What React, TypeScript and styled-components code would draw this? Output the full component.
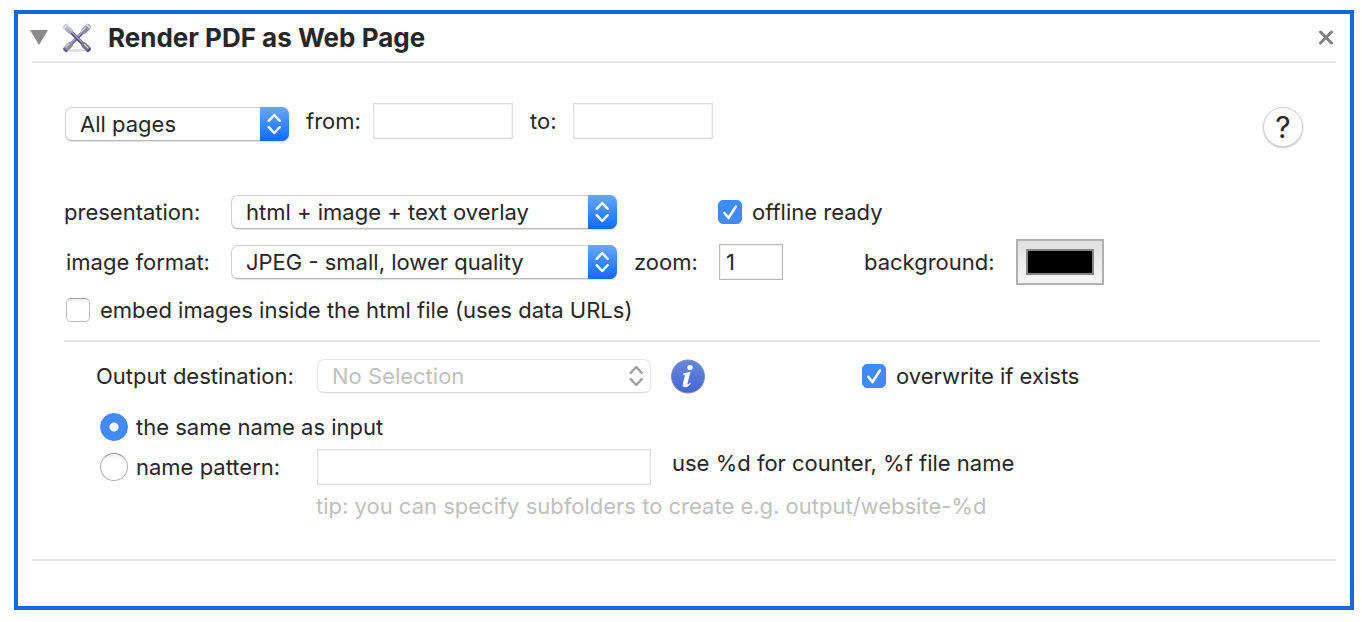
import React, { useId, useState } from "react";
import styled, { createGlobalStyle, css } from "styled-components";

const GlobalStyle = createGlobalStyle`
  *, *::before, *::after { box-sizing: border-box; }
  body {
    margin: 0;
    background: #ffffff;
    color: #262626;
    font-family: Inter, "Liberation Sans", sans-serif;
    font-size: 22px;
    line-height: 28px;
  }
  button, input, select { font: inherit; color: inherit; margin: 0; }
`;

const Page = styled.main`
  padding: 10px 8px 12px 14px;
`;

const Frame = styled.section`
  border: 4px solid #1068e0;
  padding: 0 14px 45px;
`;

const Header = styled.header`
  display: flex;
  align-items: center;
  height: 49px;
  border-bottom: 2px solid #e5e5e5;
`;

const IconButton = styled.button`
  display: flex;
  padding: 0;
  border: 0;
  background: none;
`;

const Disclosure = styled(IconButton)`
  margin-left: -2px;
`;

const CloseButton = styled(IconButton)`
  margin-left: auto;
  margin-right: 2px;
`;

const ActionIcon = styled.svg`
  margin: 0 15px 0 13px;
`;

const Title = styled.h1`
  margin: 0;
  font-size: 26px;
  font-weight: 700;
  line-height: 32px;
`;

const Body = styled.div`
  padding: 40px 16px 39px 32px;
  border-bottom: 2px solid #e5e5e5;
`;

const Row = styled.div<{ $height?: number; $gap?: number }>`
  display: flex;
  align-items: center;
  height: ${(p) => p.$height ?? 34}px;
  margin-top: ${(p) => p.$gap ?? 0}px;
`;

const PageRow = styled(Row)`
  align-items: flex-start;
`;

const Offset = styled.div`
  padding: 4px 0 0 1px;
`;

const Range = styled.div`
  display: flex;
  align-items: center;
  height: 36px;
`;

const Label = styled.label<{ $width: number; $before?: number }>`
  flex: none;
  width: ${(p) => p.$width}px;
  margin-left: ${(p) => p.$before ?? 0}px;
  white-space: nowrap;
`;

const TextField = styled.input<{ $width: number; $strong?: boolean }>`
  flex: none;
  width: ${(p) => p.$width}px;
  height: 36px;
  padding: 0 6px;
  border: 1px solid ${(p) => (p.$strong ? "#b8b8b8" : "#dedede")};
  border-radius: 0;
  background: #ffffff;
  box-shadow: inset 0 0 0 1px #f3f3f3;
  outline: none;
`;

const SelectBox = styled.div<{ $width: number }>`
  position: relative;
  flex: none;
  width: ${(p) => p.$width}px;
  height: 34px;
`;

const SelectControl = styled.select`
  appearance: none;
  display: block;
  width: 100%;
  height: 34px;
  padding: 0 34px 0 14px;
  border: 1px solid #d0d0d0;
  border-bottom-color: #b8b8b8;
  border-radius: 7px;
  background: #ffffff;
  box-shadow: 0 1px 1px rgba(0, 0, 0, 0.12);
  line-height: 28px;
  outline: none;

  &:disabled {
    border-color: #e6e6e6;
    border-bottom-color: #dcdcdc;
    box-shadow: 0 1px 1px rgba(0, 0, 0, 0.06);
    color: #bfbfbf;
    opacity: 1;
  }
`;

const Stepper = styled.span<{ $disabled?: boolean }>`
  position: absolute;
  top: 0;
  right: 0;
  display: flex;
  align-items: center;
  justify-content: center;
  width: 29px;
  height: 34px;
  border-radius: 0 7px 7px 0;
  color: ${(p) => (p.$disabled ? "#a0a0a0" : "#ffffff")};
  pointer-events: none;
  ${(p) =>
    !p.$disabled &&
    css`
      background: linear-gradient(#6ba7f9, #3b88fb 50%, #116bff);
    `}
`;

const Option = styled.label<{ $before?: number }>`
  display: flex;
  align-items: center;
  margin-left: ${(p) => p.$before ?? 0}px;
  white-space: nowrap;
`;

const CheckInput = styled.input.attrs({ type: "checkbox" })`
  appearance: none;
  display: grid;
  place-items: center;
  width: 24px;
  height: 24px;
  margin-right: 10px;
  border: 1px solid #bcbcbc;
  border-top-color: #a2a2a2;
  border-radius: 5px;
  background: linear-gradient(#f0f0f0, #ffffff 25%);

  &:checked {
    border-color: #3f88f8;
    background: #408af9;
  }
`;

const CheckBox = styled.span`
  position: relative;
  display: flex;
`;

const CheckMark = styled.svg`
  position: absolute;
  top: 0;
  left: 0;
  pointer-events: none;
`;

const RadioInput = styled.input.attrs({ type: "radio" })`
  appearance: none;
  width: 28px;
  height: 28px;
  margin-right: 8px;
  border: 1px solid #b2b2b2;
  border-top-color: #989898;
  border-radius: 50%;
  background: linear-gradient(#eeeeee, #ffffff 25%);

  &:checked {
    border-color: #3f88f8;
    background: radial-gradient(circle, #ffffff 4px, #408af9 5px);
  }
`;

const HelpButton = styled.button`
  width: 40px;
  height: 40px;
  margin: 4px 17px 0 auto;
  padding: 0;
  border: 1px solid #cfcfcf;
  border-radius: 50%;
  background: #ffffff;
  box-shadow: 0 1px 2px rgba(0, 0, 0, 0.22);
  font-size: 30px;
  line-height: 38px;
`;

const ColorWell = styled.input.attrs({ type: "color" })`
  appearance: none;
  flex: none;
  width: 88px;
  height: 46px;
  padding: 8px;
  border: 2px solid #b0b0b0;
  border-radius: 0;
  background: linear-gradient(#e0e0e0, #f6f6f6);

  &::-webkit-color-swatch-wrapper { padding: 0; }
  &::-webkit-color-swatch {
    border: 2px solid #868686;
    border-radius: 0;
  }
`;

const Divider = styled.hr`
  height: 2px;
  margin: 16px 0 17px;
  border: 0;
  background: #e5e5e5;
`;

const Output = styled.div`
  padding-left: 32px;
`;

const InfoButton = styled(IconButton)`
  margin-left: 19px;
`;

const Hint = styled.span`
  align-self: flex-start;
  margin-left: 21px;
  white-space: nowrap;
`;

const Tip = styled.p`
  margin: 7px 0 0 220px;
  color: #bfbfbf;
  white-space: nowrap;
`;

const PatternOption = styled(Option)`
  width: 217px;
`;

type SelectProps = {
  id?: string;
  width: number;
  options: string[];
  disabled?: boolean;
  label?: string;
};

function Select({ id, width, options, disabled, label }: SelectProps) {
  return (
    <SelectBox $width={width}>
      <SelectControl id={id} disabled={disabled} aria-label={label}>
        {options.map((o) => (
          <option key={o}>{o}</option>
        ))}
      </SelectControl>
      <Stepper $disabled={disabled}>
        <svg width="15" height="22" viewBox="0 0 15 22" fill="none" stroke="currentColor" strokeWidth="2.4" strokeLinecap="round" strokeLinejoin="round" aria-hidden="true">
          <path d="M1.700 7.800 7.200 2l5.500 5.800M1.700 14.200 7.200 20l5.500-5.800" />
        </svg>
      </Stepper>
    </SelectBox>
  );
}

function Checkbox({ text, initial = false, before }: { text: string; initial?: boolean; before?: number }) {
  const [on, setOn] = useState(initial);
  return (
    <Option $before={before}>
      <CheckBox>
        <CheckInput checked={on} onChange={(e) => setOn(e.target.checked)} />
        {on && (
          <CheckMark width="24" height="24" viewBox="0 0 24 24" fill="none" stroke="#fff" strokeWidth="2.6" strokeLinecap="round" strokeLinejoin="round" aria-hidden="true">
            <path d="m6.400 13 4.100 5L17.800 6.600" />
          </CheckMark>
        )}
      </CheckBox>
      {text}
    </Option>
  );
}

function WrenchIcon() {
  return (
    <ActionIcon width="32" height="32" viewBox="0 0 32 32" aria-hidden="true">
      <defs>
        <linearGradient id="steel" gradientUnits="userSpaceOnUse" x1="2" y1="2" x2="30" y2="30">
          <stop offset="0" stopColor="#c4c4d0" />
          <stop offset="0.5" stopColor="#8c8c9c" />
          <stop offset="1" stopColor="#62626e" />
        </linearGradient>
      </defs>
      <ellipse cx="16" cy="28.500" rx="9" ry="1.500" fill="#dcdcdc" />
      <g fill="none">
        <path d="M26 6 6 26" stroke="#6a6580" strokeWidth="3.600" />
        <path d="M25.500 5.500l-20 20" stroke="#b4aedb" strokeWidth="1.400" />
        <path d="M6 6l20 20" stroke="#4e4a63" strokeWidth="3.600" />
        <path d="M6.500 5.700l20 20" stroke="#aaa4d2" strokeWidth="1.400" />
        <g strokeLinecap="round">
          <path d="m5 5 4 4m18-4-4 4M5 27l4-4m18 4-4-4" stroke="url(#steel)" strokeWidth="5.600" />
          <path d="m3 6 3.500-3.500m19 0L29 6" stroke="#dcdce6" strokeWidth="1.800" />
          <path d="m6.500 4.500 4 4m14-3-4 4M5 25l3-3m15.500.500 3.500 3.500" stroke="#d0cfe0" strokeWidth="1.300" />
          <path d="m3 27 2.500 2.500M29 27l-2.500 2.500" stroke="#55555f" strokeWidth="1.600" />
        </g>
      </g>
    </ActionIcon>
  );
}

export default function App() {
  const id = useId();
  const [naming, setNaming] = useState("same");

  return (
    <>
      <GlobalStyle />
      <Page>
        <Frame>
          <Header>
            <Disclosure aria-label="Collapse">
              <svg width="18" height="16" viewBox="0 0 18 16" aria-hidden="true">
                <path d="M0 0h18L9 15z" fill="#8a8a8a" />
              </svg>
            </Disclosure>
            <WrenchIcon />
            <Title>Render PDF as Web Page</Title>
            <CloseButton aria-label="Close">
              <svg width="16" height="16" viewBox="0 0 16 16" stroke="#808080" strokeWidth="3" strokeLinecap="round" aria-hidden="true">
                <path d="m2.500 2 11 11m0-11-11 11" />
              </svg>
            </CloseButton>
          </Header>

          <Body>
            <PageRow $height={44}>
              <Offset>
                <Select width={224} options={["All pages", "Page range"]} label="Pages" />
              </Offset>
              <Range>
                <Label htmlFor={id + "from"} $width={67} $before={17}>from:</Label>
                <TextField id={id + "from"} $width={140} />
                <Label htmlFor={id + "to"} $width={43} $before={17}>to:</Label>
                <TextField id={id + "to"} $width={140} />
              </Range>
              <HelpButton aria-label="Help">?</HelpButton>
            </PageRow>

            <Row $gap={48}>
              <Label htmlFor={id + "mode"} $width={167}>presentation:</Label>
              <Select id={id + "mode"} width={386} options={["html + image + text overlay", "html + image"]} />
              <Checkbox text="offline ready" initial before={101} />
            </Row>

            <Row $height={46} $gap={10}>
              <Label htmlFor={id + "format"} $width={165} $before={2}>image format:</Label>
              <Select id={id + "format"} width={386} options={["JPEG - small, lower quality", "PNG - large, best quality"]} />
              <Label htmlFor={id + "zoom"} $width={85} $before={17}>zoom:</Label>
              <TextField id={id + "zoom"} $width={64} $strong defaultValue="1" />
              <Label htmlFor={id + "bg"} $width={152} $before={81}>background:</Label>
              <ColorWell id={id + "bg"} defaultValue="#000000" />
            </Row>

            <Row $height={28} $gap={11}>
              <Checkbox text="embed images inside the html file (uses data URLs)" before={2} />
            </Row>

            <Divider />

            <Output>
              <Row>
                <Label htmlFor={id + "dest"} $width={221}>Output destination:</Label>
                <Select id={id + "dest"} width={334} options={["No Selection"]} disabled />
                <InfoButton aria-label="Information">
                  <svg width="36" height="36" viewBox="0 0 36 36" aria-hidden="true">
                    <defs>
                      <linearGradient id="info" x1="0" y1="0" x2="0" y2="1">
                        <stop offset="0" stopColor="#6688dc" />
                        <stop offset="1" stopColor="#4666d6" />
                      </linearGradient>
                    </defs>
                    <circle cx="18" cy="18.500" r="16.500" fill="url(#info)" stroke="#7d8cc0" />
                    <circle cx="20" cy="9.600" r="2.700" fill="#fff" />
                    <path d="M13.500 15.200c2-.1 4.500-.6 7-1.400l-3 11.700c-.2.900.1 1.200.7.900.7-.3 1.400-1.100 2-1.900l.7.500c-1.500 2.700-3.200 4.200-5.600 4.200-2.200 0-3-1.400-2.500-3.500l1.900-7.500c.2-1-.1-1.600-1.700-1.700z" fill="#fff" />
                  </svg>
                </InfoButton>
                <Checkbox text="overwrite if exists" initial before={156} />
              </Row>

              <Row $height={28} $gap={20}>
                <Option $before={4}>
                  <RadioInput name="naming" checked={naming === "same"} onChange={() => setNaming("same")} />
                  the same name as input
                </Option>
              </Row>

              <Row $height={36} $gap={8}>
                <PatternOption $before={4}>
                  <RadioInput name="naming" checked={naming === "pattern"} onChange={() => setNaming("pattern")} />
                  name pattern:
                </PatternOption>
                <TextField $width={334} aria-label="Name pattern" />
                <Hint>use %d for counter, %f file name</Hint>
              </Row>

              <Tip>tip: you can specify subfolders to create e.g. output/website-%d</Tip>
            </Output>
          </Body>
        </Frame>
      </Page>
    </>
  );
}
